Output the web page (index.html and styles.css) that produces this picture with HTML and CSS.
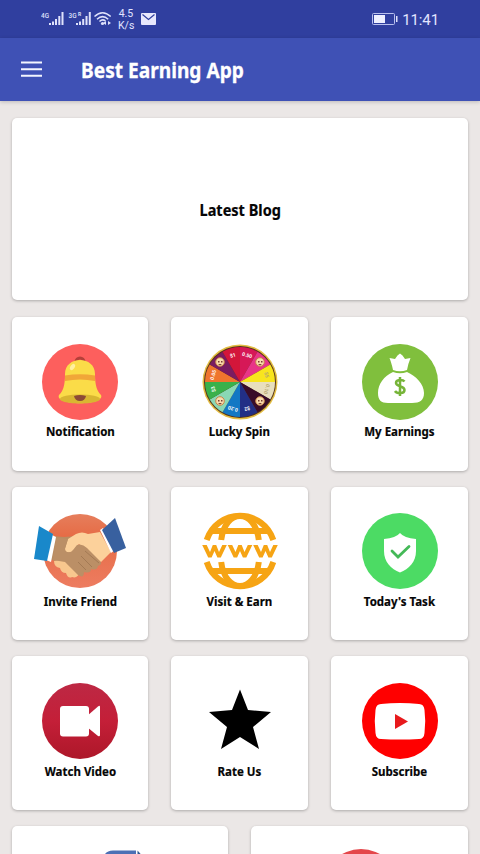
FILE: index.html
```html
<!DOCTYPE html>
<html lang="en">
<head>
<meta charset="utf-8">
<title>Best Earning App</title>
<link rel="stylesheet" href="styles.css">
</head>
<body>
<header>
  <div class="status">
    <svg class="status-icons" width="70" height="20" viewBox="0 0 70 20">
      <g fill="#dfe2fb">
        <path d="M8 14h2v2H8zM11 12.5h2V16h-2zM14 10h2v6h-2zM17.300 7h2v9h-2zM20.500 3h2v13h-2z"/>
        <path d="M35 14h2v2h-2zM38 12.500h2V16h-2zM41.200 10h2v6h-2zM44.500 7h2v9h-2zM47.800 3h2v13h-2z"/>
        <path d="M62 14l3-2v4zM70 14l-3-2v4z"/>
        <circle cx="61.500" cy="14.500" r="1.600"/>
      </g>
      <g class="tiny"><text x="0" y="9" textLength="8" lengthAdjust="spacingAndGlyphs">4G</text><text x="27.500" y="9" textLength="8" lengthAdjust="spacingAndGlyphs">3G</text><text class="roam" x="37" y="7">R</text></g>
      <g fill="none" stroke="#dfe2fb" stroke-width="1.500"><path d="M53.500 7.500Q61.500 0 69.700 7.500M56 10.200Q61.500 5 67.200 10.200M58.500 12.500Q61.500 9.500 64.500 12"/></g>
    </svg>
    <div class="speed">4.5<br>K/s</div>
    <svg class="mail" width="15" height="12" viewBox="0 0 15 12"><rect width="15" height="12" rx="1" fill="#e8e8fc"/><path d="M1.500 1.500l6 5 6-5" fill="none" stroke="#303f9f" stroke-width="1.200"/></svg>
    <svg class="battery" width="26" height="12" viewBox="0 0 26 12"><rect x=".5" y=".5" width="22" height="11" rx="1" fill="none" stroke="#b9c0ee"/><path d="M2 2h11v8H2z" fill="#eef0ff"/><path d="M24 3h1.500v6H24z" fill="#dfe2fb"/></svg>
    <time>11:41</time>
  </div>
  <div class="toolbar">
    <svg width="22" height="16" viewBox="0 0 22 16"><path d="M0 1.500h21M0 8.200h21M0 14.800h21" stroke="#f3f5ff" stroke-width="2"/></svg>
    <h1>Best Earning App</h1>
  </div>
</header>
<main>
  <section class="card blog"><span>Latest Blog</span></section>
  <section class="grid">
    <article class="card tile">
      <svg viewBox="-48 -38 96 76"><circle r="38" fill="#fd5f5d"/>
        <path d="M-4-20a4 4 0 0 1 8 0" fill="none" stroke="#b44039" stroke-width="3"/>
        <path d="M-15-8C-15-17-8-22 0-22S15-17 15-8C15 4 17 9 21 13 26 24-26 24-21 13-17 9-15 4-15-8z" fill="#fbdc48"/>
        <path d="M-15-6.500Q0-9 15-6.500V-1Q0-4-15-1z" fill="#f1a638"/>
        <ellipse cy="17" rx="20" ry="4.500" fill="#d9b631"/><path d="M-6 14Q0 12 6 14 5 19 0 19T-6 14z" fill="#8d4a36"/>
        <ellipse cx="-7.500" cy="-15" rx="2" ry="3.500" fill="#fff0a0" transform="rotate(35 -7.500 -15)"/>
      </svg><h2>Notification</h2>
    </article>
    <article class="card tile">
      <svg viewBox="-48 -38 96 76"><circle r="37.500" fill="#e3bd43"/><circle r="36" fill="#54321b"/>
        <g>
          <path d="M0 0V-35A35 35 0 0 1 17.500-30.300z" fill="#d61857"/>
          <path d="M0 0L17.500-30.300A35 35 0 0 1 30.300-17.500z" fill="#e83588"/>
          <path d="M0 0L30.300-17.500A35 35 0 0 1 35 0z" fill="#f8e51e"/>
          <path d="M0 0H35A35 35 0 0 1 30.300 17.500z" fill="#e8dfbd"/>
          <path d="M0 0L30.300 17.500A35 35 0 0 1 17.500 30.300z" fill="#390c29"/>
          <path d="M0 0L17.500 30.300A35 35 0 0 1 0 35z" fill="#222f86"/>
          <path d="M0 0V35A35 35 0 0 1-17.500 30.300z" fill="#1378c4"/>
          <path d="M0 0L-17.500 30.300A35 35 0 0 1-30.300 17.500z" fill="#8ad8b5"/>
          <path d="M0 0L-30.300 17.500A35 35 0 0 1-35 0z" fill="#39b14b"/>
          <path d="M0 0H-35A35 35 0 0 1-30.300-17.500z" fill="#ef752e"/>
          <path d="M0 0L-30.300-17.500A35 35 0 0 1-17.500-30.300z" fill="#7a1b61"/>
          <path d="M0 0L-17.500-30.300A35 35 0 0 1 0-35z" fill="#d3163a"/>
        </g>
        <g fill="#f8dcae" stroke="#c98445"><circle cx="-20" cy="-20" r="4.300"/><circle cx="20" cy="-20" r="4.300"/><circle cx="-20" cy="19" r="4.300"/><circle cx="20" cy="19" r="4.300"/></g>
        <g fill="#7b3b31"><path d="M-22-21h1.500v1.500H-22zM-19-21h1.500v1.500H-19zM18-21h1.500v1.500H18zM21-21h1.500v1.500H21zM-22 18h1.500v1.500H-22zM-19 18h1.500v1.500H-19zM18 18h1.500v1.500H18zM21 18h1.500v1.500H21z"/><path d="M-22-18h4l-2 1.500zM18-18h4l-2 1.500zM-22 21h4l-2 1.500zM18 21h4l-2 1.500z"/></g>
        <g class="prize"><text transform="rotate(15)" y="-26">0.50</text><text transform="rotate(-15)" y="-26">$1</text><text class="muted" transform="rotate(75)" y="-26">$5</text><text class="muted" transform="rotate(105)" y="-26">0.10</text><text transform="rotate(165)" y="-26">$2</text><text transform="rotate(195)" y="-26">0.20</text><text transform="rotate(255)" y="-26">$3</text><text transform="rotate(285)" y="-26">0.05</text></g>
      </svg><h2>Lucky Spin</h2>
    </article>
    <article class="card tile">
      <svg viewBox="-48 -38 96 76"><circle r="38" fill="#80bf3d"/>
        <path d="M-7-12C-8-17-9-20-10.500-24L-5-23-2.500-26.500 0-28.500 2.500-26.500 5-23 10.500-24Q8-18 7-12Q0-9.500-7-12z" fill="#fff"/>
        <path d="M-7-10Q0-7.500 7-10C16-6 24 2 24 11C24 18 20 21 12 21H-12C-19 21-22 18-22 11C-22 2-16-6-7-10z" fill="#fff"/>
        <path d="M4.500-.5C3-2.500-4-3-4 1 -4 5 4.500 3.500 4.500 8 4.500 12-3 12-5 9M0-5v19" fill="none" stroke="#76b438" stroke-width="2.500"/>
      </svg><h2>My Earnings</h2>
    </article>
    <article class="card tile">
      <svg viewBox="-48 -38 96 76"><defs><linearGradient id="coral" x2="0" y2="1"><stop stop-color="#e67e5c"/><stop offset=".3" stop-color="#e66c46"/><stop offset="1" stop-color="#ed7c60"/></linearGradient></defs>
        <circle r="37" fill="url(#coral)"/>
        <path d="M-27-15L-16-14-3-15-4 8-12 14-31 8z" fill="#b98c61"/>
        <path d="M-26 10L-16 8 0 20Q-2 28-8 26-12 28-14 22-19 22-20 17-26 16-26 10z" fill="#f8c78e"/>
        <path d="M-4-17Q2-20 8-17L20-19 31 1 21 11 8 3-1-7-8 1Q-14 3-15-2L-12-12z" fill="#fcd19b"/>
        <path d="M-15-3L-15 0Q-10 3-7-1L-3-6Q2-8 7-3L20 10Q23 13 18 15 17 20 11 18 11 23 4 21 4 28-2 24L-15 11-27 9-24-14-12-12z" fill="#bb8f66"/>
        <path d="M5 0l14 12M1 5l11 11M-2 11l8 8" fill="none" stroke="#a37a54"/>
        <path d="M-28-16L-24-14-29 11-34 9zM20-21L23-23 36-2 31 2z" fill="#fff"/>
        <path d="M-41-25L-27-17-33 10-46 8z" fill="#1988ca"/><path d="M22-21L35-33 46-3 34 2z" fill="#38609f"/>
      </svg><h2>Invite Friend</h2>
    </article>
    <article class="card tile">
      <svg viewBox="-48 -38 96 76">
        <g fill="none" stroke="#f6a414"><g id="globe"><path d="M-33.300-11A35 35 0 0 1 33.300-11" stroke-width="6"/><path d="M-18.800-11C-15-43 15-43 18.800-11" stroke-width="6"/><path d="M-30-20H30" stroke-width="6"/></g><use href="#globe" transform="scale(1 -1)"/></g>
        <path id="w" d="M-12.300-6h4.500L-4.500 1-1.700-6h3.400L4.500 1 7.800-6h4.500L6.300 6.500H2.900L0 0-2.900 6.500H-6.300z" fill="#f6a414"/><use href="#w" x="-25.500"/><use href="#w" x="25.500"/>
      </svg><h2>Visit &amp; Earn</h2>
    </article>
    <article class="card tile">
      <svg viewBox="-48 -38 96 76"><circle r="38" fill="#4cdb64"/><path d="M-16-12Q-4-13 0-18Q4-13 16-12V0C16 11 9 18 0 21.500C-9 18-16 11-16 0z" fill="#fff"/><path d="M-8 0L-2 6 9-4.500" fill="none" stroke="#44b957" stroke-width="2.800" stroke-linecap="round"/></svg><h2>Today's Task</h2>
    </article>
    <article class="card tile">
      <svg viewBox="-48 -38 96 76"><defs><linearGradient id="ruby" x2="0" y2="1"><stop stop-color="#bd2844"/><stop offset=".5" stop-color="#c41f38"/><stop offset="1" stop-color="#ad1729"/></linearGradient></defs><circle r="38" fill="url(#ruby)"/><rect x="-20" y="-15" width="29" height="30.500" rx="3" fill="#fff"/><path d="M7-5L18-14.500Q20-16 20-14V14Q20 16 18 15L7 6z" fill="#fff"/></svg><h2>Watch Video</h2>
    </article>
    <article class="card tile">
      <svg viewBox="-48 -38 96 76"><path d="M0-31.500L8-11 31-9 13 6 19 28 0 16-19 28-13 6-31-9-8-11z"/></svg><h2>Rate Us</h2>
    </article>
    <article class="card tile">
      <svg viewBox="-48 -38 96 76"><circle r="38" fill="#f00"/><path d="M-19-17Q0-19 19-17Q24-17 24.500-11Q26 0 24.500 12Q24 18 19 18Q0 19-19 18Q-24 18-24.500 12Q-26 0-24.500-11Q-24-17-19-17z" fill="#fff"/><path d="M-5-7L8 0.500-5 8z" fill="#e8191c"/></svg><h2>Subscribe</h2>
    </article>
  </section>
  <section class="grid wide">
    <article class="card"><svg viewBox="-48 -38 96 76"><path d="M-17 36V-25Q-17-36.500-7-36.500H16V-25H25V36z" fill="#4c70b5"/><path d="M17.500-36.500L27-26H17.500z" fill="#315b95"/></svg></article>
    <article class="card"><svg viewBox="-48 -38 96 76"><circle cx="1" r="38" fill="#e4474b"/></svg></article>
  </section>
</main>
</body>
</html>
```
FILE: styles.css
```css
* { box-sizing: border-box; }
body {
  margin: 0;
  height: 854px;
  overflow: hidden;
  background: #ebe7e6;
  font-family: "Noto Sans", "Open Sans", sans-serif;
  color: #050505;
}
.status {
  display: flex;
  align-items: center;
  height: 38px;
  padding: 0 41px;
  background: #303f9f;
  color: #e2e5ff;
  font-family: Roboto, sans-serif;
}
.status-icons { flex: none; }
.tiny { fill: #dfe2fb; font: 500 8px Roboto, sans-serif; }
.tiny .roam { font-size: 5px; font-weight: 700; }
.speed {
  width: 16px;
  margin: 2px 7px 0;
  font-size: 10.5px;
  line-height: 12px;
  text-align: center;
}
.battery { margin-left: auto; }
time { margin: 1px 0 0 4px; font-size: 15px; letter-spacing: -.1px; }
.toolbar {
  display: flex;
  align-items: center;
  height: 63px;
  padding: 0 0 1px 21px;
  background: #3f51b5;
  box-shadow: 0 1px 4px #0003;
}
h1 {
  margin: 2px 0 0 38px;
  color: #fff;
  font-size: 21.500px;
  line-height: 30px;
  white-space: nowrap;
  transform: scaleX(.89);
  transform-origin: left;
  -webkit-text-stroke: .3px currentColor;
}
main { padding: 17px 12px 0 11.500px; }
.card {
  background: #fff;
  border-radius: 5px;
  box-shadow: 0 1px 3px #0004;
}
.blog {
  display: grid;
  place-items: center;
  height: 182px;
  margin-bottom: 17px;
  font-size: 16.500px;
  font-weight: 700;
}
.blog span { transform: scaleX(.88); -webkit-text-stroke: .2px currentColor; }
.grid {
  display: grid;
  grid-template-columns: repeat(3, 1fr);
  grid-auto-rows: 153.700px;
  column-gap: 23px;
  row-gap: 16px;
}
.wide { grid-template-columns: repeat(2, 1fr); margin-top: 16px; }
.card svg { display: block; width: 96px; height: 76px; margin: 0 auto; overflow: visible; }
.tile { padding-top: 26.500px; text-align: center; }
.wide .card { padding-top: 22.500px; }
h2 {
  margin: 2.800px 0 0;
  font-size: 13px;
  line-height: 18px;
  white-space: nowrap;
  transform: scaleX(.885);
  -webkit-text-stroke: .2px currentColor;
}
.prize { fill: #fff; font: 700 5px Roboto, sans-serif; text-anchor: middle; }
.prize .muted { fill: #b5a66e; }
```
